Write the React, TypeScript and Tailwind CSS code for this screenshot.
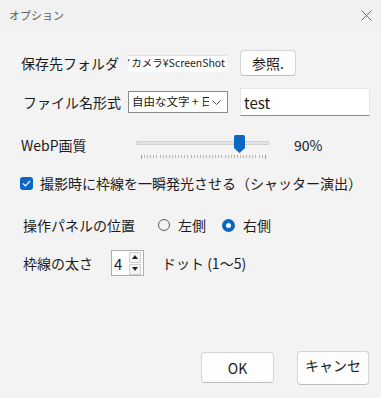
import React from "react";

const ticks = Array.from({ length: 41 }, (_, i) => i);

export default function App() {
  return (
    <div className="w-[381px] h-[398px] bg-[#f3f3f3] flex flex-col font-['Noto_Sans_CJK_JP',sans-serif] text-[#1b1b1b] overflow-hidden">
      {/* title bar */}
      <div className="h-[30px] flex items-center justify-between pl-[9px] pr-[9px] bg-[#f1f1f1]">
        <span className="text-[11px] text-[#5c5c5c] leading-none">オプション</span>
        <svg width="11" height="11" viewBox="0 0 11 11">
          <path d="M0.5 0.5 L10.5 10.5 M10.5 0.5 L0.5 10.5" stroke="#6a6a6a" strokeWidth="1" fill="none" />
        </svg>
      </div>

      <div className="flex-1 flex flex-col pl-[21px]">
        {/* row 1 */}
        <div className="mt-[20px] h-[26px] flex items-center">
          <span className="w-[107px] text-[14px] leading-none whitespace-nowrap">保存先フォルダ</span>
          <div className="w-[99px] h-[17px] bg-white border-t border-[#e0e0e0] flex items-center justify-end overflow-hidden pr-[2px]">
            <span className="text-[10.5px] whitespace-nowrap leading-none">イカメラ¥ScreenShot</span>
          </div>
          <button className="ml-[13px] w-[56px] h-[26px] bg-[#fdfdfd] border border-[#d4d4d4] border-b-[#bcbcbc] rounded-[4px] text-[14px] leading-none flex items-center justify-center">
            参照.
          </button>
        </div>

        {/* row 2 */}
        <div className="mt-[12px] h-[28px] flex items-center">
          <span className="ml-[2px] w-[105px] text-[14px] leading-none whitespace-nowrap">ファイル名形式</span>
          <div className="w-[100px] h-[22px] bg-white border border-[#8a8a8a] flex items-center overflow-hidden relative">
            <span className="pl-[3px] w-[80px] overflow-hidden whitespace-nowrap text-[11.5px] leading-none">自由な文字 + 日時</span>
            <svg className="absolute right-[6px] top-[8px]" width="9" height="6" viewBox="0 0 9 6">
              <path d="M0.5 0.5 L4.5 4.5 L8.5 0.5" stroke="#555" strokeWidth="1" fill="none" />
            </svg>
          </div>
          <div className="ml-[12px] w-[130px] h-[28px] bg-white border border-[#e6e6e6] border-b-[#8c8c8c] flex items-center pl-[3px]">
            <span className="text-[15px] leading-none">test</span>
          </div>
        </div>

        {/* row 3 slider */}
        <div className="mt-[15px] h-[28px] flex items-center">
          <span className="w-[115px] text-[14px] leading-none whitespace-nowrap">WebP画質</span>
          <div className="relative w-[133px] h-[28px]">
            <div className="absolute left-0 right-0 top-[10px] h-[4px] bg-[#e4e4e4] border border-[#d2d2d2]" />
            <svg className="absolute left-[98px] top-[4px]" width="11" height="18" viewBox="0 0 11 18">
              <path d="M1.5 0 H9.5 Q11 0 11 1.5 V13 L5.5 18 L0 13 V1.5 Q0 0 1.5 0 Z" fill="#0a68c4" />
            </svg>
            <div className="absolute left-[5px] top-[24px] flex">
              {ticks.map((i) => (
                <div
                  key={i}
                  className={
                    i === 0 || i === 40
                      ? "w-[1px] h-[4px] bg-[#9a9a9a] mr-[2.1px]"
                      : "w-[1px] h-[3px] bg-[#b4b4b4] mr-[2.1px]"
                  }
                />
              ))}
            </div>
          </div>
          <span className="ml-[25px] text-[14px] leading-none">90%</span>
        </div>

        {/* checkbox */}
        <div className="mt-[14px] h-[20px] flex items-center">
          <div className="ml-[-1px] w-[13px] h-[13px] rounded-[3px] bg-[#0a68c4] flex items-center justify-center">
            <svg width="9" height="7" viewBox="0 0 9 7">
              <path d="M1 3.5 L3.5 6 L8 1" stroke="white" strokeWidth="1.2" fill="none" />
            </svg>
          </div>
          <span className="ml-[7px] text-[14px] leading-none whitespace-nowrap">
            撮影時に枠線を一瞬発光させる（シャッター演出）
          </span>
        </div>

        {/* radio row */}
        <div className="mt-[22px] h-[20px] flex items-center">
          <span className="ml-[2px] w-[135px] text-[14px] leading-none whitespace-nowrap">操作パネルの位置</span>
          <div className="w-[12px] h-[12px] rounded-full border border-[#5a5a5a]" />
          <span className="ml-[8px] text-[14px] leading-none">左側</span>
          <div className="ml-[16px] w-[13px] h-[13px] rounded-full bg-[#0a68c4] flex items-center justify-center">
            <div className="w-[5px] h-[5px] rounded-full bg-white" />
          </div>
          <span className="ml-[8px] text-[14px] leading-none">右側</span>
        </div>

        {/* spinner row */}
        <div className="mt-[15px] h-[26px] flex items-center">
          <span className="ml-[2px] w-[88px] text-[14px] leading-none whitespace-nowrap">枠線の太さ</span>
          <div className="w-[33px] h-[26px] bg-white border border-[#adadad] flex items-center">
            <span className="pl-[2px] w-[17px] text-[15px] leading-none">4</span>
            <div className="flex flex-col gap-[1px]">
              <div className="w-[12px] h-[11px] bg-[#f4f4f4] border border-[#cfcfcf] flex items-center justify-center">
                <svg width="6" height="4" viewBox="0 0 6 4"><path d="M0 4 L3 0 L6 4 Z" fill="#222" /></svg>
              </div>
              <div className="w-[12px] h-[11px] bg-[#f4f4f4] border border-[#cfcfcf] flex items-center justify-center">
                <svg width="6" height="4" viewBox="0 0 6 4"><path d="M0 0 L3 4 L6 0 Z" fill="#222" /></svg>
              </div>
            </div>
          </div>
          <span className="ml-[18px] text-[14px] leading-none whitespace-nowrap">ドット (1〜5)</span>
        </div>

        {/* buttons */}
        <div className="mt-auto mb-[13px] pr-[12px] flex justify-end items-start gap-[23px]">
          <button className="mt-[1px] w-[73px] h-[31px] bg-[#fdfdfd] border border-[#d4d4d4] border-b-[#bcbcbc] rounded-[4px] text-[14px] leading-none flex items-center justify-center">
            OK
          </button>
          <button className="w-[72px] h-[34px] bg-[#fdfdfd] border border-[#d4d4d4] border-b-[#bcbcbc] rounded-[4px] text-[14px] flex justify-center">
            <span className="mt-[3px] w-[57px] h-[20px] overflow-hidden leading-[20px] break-all text-center">キャンセル</span>
          </button>
        </div>
      </div>
    </div>
  );
}
